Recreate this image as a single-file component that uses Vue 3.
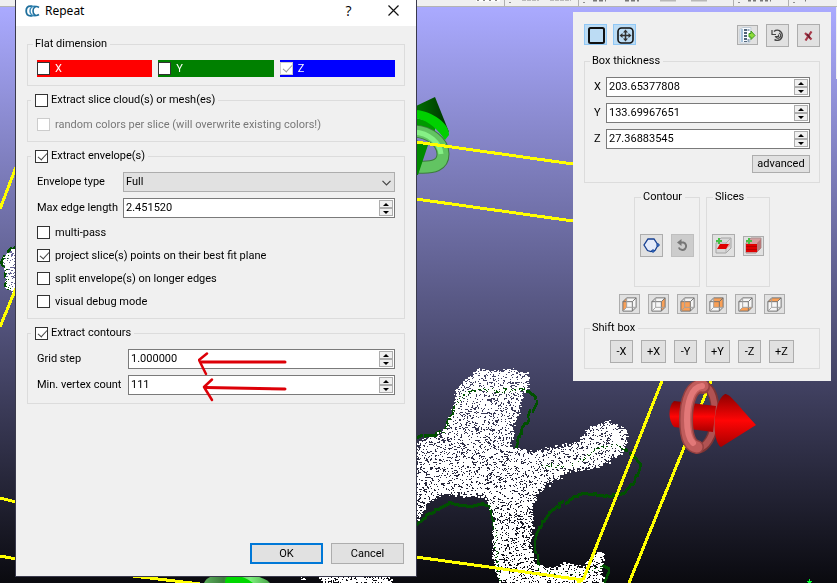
<script setup>
import { ref, onMounted } from 'vue'

const axes = ref([
  { name: 'X', tone: 'red', on: false, locked: false },
  { name: 'Y', tone: 'green', on: false, locked: false },
  { name: 'Z', tone: 'blue', on: true, locked: true },
])

const extractSlices = ref(false)
const extractEnvelopes = ref(true)
const extractContours = ref(true)
const envelopeOptions = ref([
  { id: 'multi', label: 'multi-pass', on: false },
  { id: 'project', label: 'project slice(s) points on their best fit plane', on: true },
  { id: 'split', label: 'split envelope(s) on longer edges', on: false },
  { id: 'debug', label: 'visual debug mode', on: false },
])
const maxEdge = ref('2.451520')
const contourFields = ref([
  { id: 'grid', label: 'Grid step', value: '1.000000', step: 1, digits: 6 },
  { id: 'vertex', label: 'Min. vertex count', value: '111', step: 1, digits: 0 },
])
const thickness = ref([
  { id: 'tx', label: 'X', value: '203.65377808' },
  { id: 'ty', label: 'Y', value: '133.69967651' },
  { id: 'tz', label: 'Z', value: '27.36883545' },
])
const shifts = ['-X', '+X', '-Y', '+Y', '-Z', '+Z']

const cubes = [
  { name: 'Left', face: '2,6 6,2 6,12 2,16' },
  { name: 'Right', face: '12,6 16,2 16,12 12,16' },
  { name: 'Front', face: '2,6 12,6 12,16 2,16' },
  { name: 'Back', face: '6,2 16,2 16,12 6,12' },
  { name: 'Bottom', face: '2,16 6,12 16,12 12,16' },
  { name: 'Top', face: '2,6 6,2 16,2 12,6' },
]

function bump(field, dir) {
  const digits = field.digits ?? 8
  field.value = (parseFloat(field.value) + dir).toFixed(digits)
}
function bumpEdge(dir) {
  maxEdge.value = (parseFloat(maxEdge.value) + dir).toFixed(6)
}

const cloud = ref(null)

const branches = [
  [[416,442],[443,432],[452,413],[455,390],[465,380],[478,368],[490,370],[510,369],[527,373],[527,387],[522,393],[518,413],[512,427],[511,447],[533,452],[553,447],[578,442],[588,428],[607,421],[623,428],[628,437],[620,453],[597,467],[570,470],[550,482],[537,493],[530,510],[532,523],[529,547],[535,563],[543,568],[557,567],[565,562],[582,567],[590,557],[600,550],[603,557],[600,567],[602,583],[500,583],[493,557],[493,517],[485,495],[460,495],[443,493],[430,500],[416,520]],
  [[16,248],[10,250],[4,256],[4,264],[6,269],[5,286],[12,290],[16,291]],
  [[320,575],[392,575],[389,583],[322,583]],
  [[300,576],[305,576],[303,580]],
]
const outlines = [
  [[416,439],[425,435],[435,435],[443,431],[448,420],[454,412],[458,401],[467,393],[480,388],[500,390],[520,389],[529,391],[536,397],[536,402],[531,411],[528,419],[522,427],[520,436],[516,448]],
  [[543,465],[577,465],[590,455],[600,449],[614,446],[623,447],[631,453],[640,463],[637,473],[632,483],[624,493],[610,496],[600,494],[584,494],[570,499],[560,504],[547,514],[541,523],[537,533],[536,545],[537,560],[541,571],[560,573],[590,572],[603,566],[610,569],[607,576],[604,583]],
  [[416,527],[423,519],[430,514],[440,508],[449,503],[462,505],[471,506],[480,504],[490,505],[493,517],[496,540],[497,558],[500,580]],
  [[15,247],[11,250],[5,257],[2,264],[6,269],[5,276],[7,280],[5,285],[8,288],[15,288]],
]

function inside(poly, x, y) {
  let hit = false
  for (let i = 0, j = poly.length - 1; i < poly.length; j = i++) {
    const [xi, yi] = poly[i]
    const [xj, yj] = poly[j]
    if (yi > y !== yj > y && x < ((xj - xi) * (y - yi)) / (yj - yi) + xi) hit = !hit
  }
  return hit
}

onMounted(() => {
  const ctx = cloud.value.getContext('2d')
  let seed = 20117
  const rnd = () => {
    seed = (seed * 16807) % 2147483647
    return seed / 2147483647
  }
  ctx.fillStyle = '#005000'
  for (const line of outlines) {
    let wobble = 0
    for (let i = 1; i < line.length; i++) {
      const [ax, ay] = line[i - 1]
      const [bx, by] = line[i]
      const n = Math.max(Math.abs(bx - ax), Math.abs(by - ay), 1)
      for (let k = 0; k < n; k++) {
        if (rnd() < 0.3) wobble = Math.round(rnd() * 2 - 1)
        ctx.fillRect(Math.round(ax + ((bx - ax) * k) / n) - 1 + wobble, Math.round(ay + ((by - ay) * k) / n) - 1 + wobble, 2, 3)
      }
    }
  }
  ctx.fillStyle = '#ffffff'
  for (const poly of branches) {
    const xs = poly.map((p) => p[0])
    const ys = poly.map((p) => p[1])
    for (let y = Math.min(...ys) - 3; y < Math.max(...ys) + 3; y++) {
      for (let x = Math.min(...xs) - 3; x < Math.max(...xs) + 3; x++) {
        if (rnd() < 0.58 && inside(poly, x + rnd() * 4 - 2, y + rnd() * 4 - 2)) {
          ctx.fillRect(x, y, rnd() < 0.65 ? 2 : 1, rnd() < 0.3 ? 2 : 1)
        }
      }
    }
  }
})
</script>

<template>
  <main class="workspace">
    <div class="scene" aria-hidden="true">
      <canvas ref="cloud" class="layer" width="837" height="583"></canvas>
      <svg class="layer" viewBox="0 0 837 583" preserveAspectRatio="xMinYMin slice">
        <defs>
          <linearGradient id="redCone" x1="0" y1="0" x2="0" y2="1">
            <stop offset="0" stop-color="#8c0000" />
            <stop offset=".5" stop-color="#ff0505" />
            <stop offset="1" stop-color="#a80000" />
          </linearGradient>
          <linearGradient id="greenCone" x1="0" y1="0" x2="1" y2="0">
            <stop offset="0" stop-color="#007000" />
            <stop offset="1" stop-color="#003000" />
          </linearGradient>
          <linearGradient id="greenRing" x1="0" y1="0" x2="1" y2="0">
            <stop offset="0" stop-color="#5cae5c" />
            <stop offset=".3" stop-color="#3c7c3c" />
            <stop offset=".7" stop-color="#7cf07c" />
            <stop offset="1" stop-color="#4ca64c" />
          </linearGradient>
        </defs>

        <path d="M416 118L436 123L434 136L416 128Z" fill="#009a00" />
        <path d="M416 106L435 97L449 132L440 128L416 112Z" fill="url(#greenCone)" />
        <path d="M416 110C432 111 450 124 449 135L445 140C438 130 430 121 416 118Z" fill="#00d000" />
        <g fill="none">
          <path d="M414 131C430 132 443 142 443 154C443 165 434 168 418 167" stroke="#3c7c3c" stroke-width="13" />
          <path d="M414 131C430 132 443 142 443 154C443 165 434 168 418 167" stroke="#62c462" stroke-width="11" />
          <path d="M414 132C429 133 440 143 441 154" stroke="#86f086" stroke-width="5" />
        </g>
        <path d="M416 140L428 145L418 175H416Z" fill="#008a00" />

        <g stroke="#ffff00" stroke-width="3" fill="none" shape-rendering="crispEdges">
          <path d="M416 142L573 164M416 199L573 221M0 209L16 167M0 327L16 288M0 498L16 502M0 556L16 559M133 576L200 584M416 557L583 580M662 381L583 580M711 381L629 583M577 583L583 580" />
        </g>

        <path d="M701 385C712 385 718 402 714 426C711 442 703 450 696 449" fill="none" stroke="#7c3434" stroke-width="9" />
        <path d="M701 385C712 385 717 402 714 426C711 442 703 449 696 448" fill="none" stroke="#b05252" stroke-width="6" />
        <path d="M674 401L716 406L713 432L674 427C668 421 668 406 674 401Z" fill="url(#redCone)" />
        <g fill="none" stroke-linecap="round">
          <path d="M703 387C692 384 686 400 686 420C686 436 690 446 697 447" stroke="#944040" stroke-width="14" />
          <path d="M703 386C692 384 686 400 686 420C686 436 690 446 697 447" stroke="#c05c5c" stroke-width="11" />
          <path d="M702 386C691 387 687 404 687 420C687 432 690 440 693 443" stroke="#e27878" stroke-width="6" />
        </g>
        <path d="M725 394C730 394 735 402 756 425L721 447C712 442 712 402 725 394Z" fill="url(#redCone)" />

        <path d="M204 583Q207 574 230 574Q262 574 270 583Z" fill="url(#greenRing)" />
        <path d="M225 583Q225 574 234 575Q246 577 253 583Z" fill="#00d800" />
        <path d="M807 581h2v-2h1v2h2v1h-1v1h-3v-1h-1z" fill="#00ff30" />
        <path d="M836 7h1v72h-1z" fill="#f0f0f0" />
      </svg>
    </div>

    <div class="toolstrip" aria-hidden="true">
      <svg class="toolmarks" viewBox="0 0 397 6">
        <path d="M64.500 0v6M138.500 0v6M293.500 0v6M348.500 0v6" stroke="#b0b0b0" />
        <path d="M36 0h24" stroke="#fff" stroke-width="3" />
        <path d="M37 0h22" stroke="#888" stroke-width="2" stroke-dasharray="2 4" />
        <path d="M69 2.500h2M143 2.500h2M298 2.500h2M353 2.500h2" stroke="#909090" />
        <path d="M82 0h17M110 0h21" stroke="#bbb" stroke-width="2" stroke-dasharray="4 1" />
        <path d="M153 0h13M185 0h14" stroke="#777" stroke-width="3" stroke-dasharray="4 2" />
        <path d="M220 .5h16M251 .5h16" stroke="#b8b8b8" stroke-width="2" />
        <path d="M308 0h8M320 0h11M365 0h1" stroke="#777" stroke-width="3" stroke-dasharray="3 2" />
      </svg>
    </div>

    <div class="stage">
      <section class="dialog" aria-labelledby="dlg-title">
        <header class="titlebar">
          <svg class="logo" viewBox="0 0 15 14" aria-hidden="true">
            <path d="M7.500 2.200H5.500C3 2.200 1.200 4 1.200 7S3 11.800 5.500 11.800H7.500" fill="none" stroke="#1f6f9c" stroke-width="1.800" />
            <path d="M11 2.500C7 1.500 5 4 5 7S7 12.500 11 11.500" fill="none" stroke="#3b8cba" stroke-width="1.500" />
            <path d="M14 3.500C10.500 1 8 4 8 7S10.500 13 14 10.500" fill="none" stroke="#1f6f9c" stroke-width="1.600" />
          </svg>
          <h1 id="dlg-title">Repeat</h1>
          <button class="caption" type="button" aria-label="Help">?</button>
          <button class="caption" type="button" aria-label="Close">
            <svg width="11" height="11" viewBox="0 0 11 11"><path d="M.5 .5L10.500 10.500M10.500 .5L.5 10.500" stroke="#111" stroke-width="1.200" /></svg>
          </button>
        </header>

        <div class="body">
          <fieldset class="group">
            <legend>Flat dimension</legend>
            <div class="axes">
              <label v-for="a in axes" :key="a.name" class="axis" :class="a.tone">
                <input v-model="a.on" type="checkbox" :disabled="a.locked" /><span>{{ a.name }}</span>
              </label>
            </div>
          </fieldset>

          <fieldset class="group">
            <legend class="checkable">
              <label><input v-model="extractSlices" type="checkbox" /><span>Extract slice cloud(s) or mesh(es)</span></label>
            </legend>
            <label class="option off"><input type="checkbox" disabled /><span>random colors per slice (will overwrite existing colors!)</span></label>
          </fieldset>

          <fieldset class="group">
            <legend class="checkable">
              <label><input v-model="extractEnvelopes" type="checkbox" /><span>Extract envelope(s)</span></label>
            </legend>
            <div class="form envelope">
              <label for="envtype">Envelope type</label>
              <div class="combo">
                <select id="envtype"><option>Full</option><option>Lower</option><option>Upper</option></select>
                <svg class="chevron" width="9" height="6" viewBox="0 0 9 6" aria-hidden="true"><path d="M.5 .8L4.500 4.800L8.500 .8" fill="none" stroke="#444" stroke-width="1.200" /></svg>
              </div>
              <label for="maxedge">Max edge length</label>
              <div class="spin">
                <input id="maxedge" v-model="maxEdge" type="text" />
                <div class="steps">
                  <button type="button" aria-label="Increase" @click="bumpEdge(1)"><svg width="6" height="3" viewBox="0 0 6 3"><path d="M3 0L6 3H0Z" /></svg></button>
                  <button type="button" aria-label="Decrease" @click="bumpEdge(-1)"><svg width="6" height="3" viewBox="0 0 6 3"><path d="M0 0H6L3 3Z" /></svg></button>
                </div>
              </div>
            </div>
            <label v-for="o in envelopeOptions" :key="o.id" class="option spaced"><input v-model="o.on" type="checkbox" /><span>{{ o.label }}</span></label>
          </fieldset>

          <fieldset class="group">
            <legend class="checkable">
              <label><input v-model="extractContours" type="checkbox" /><span>Extract contours</span></label>
            </legend>
            <div class="form contours">
              <template v-for="f in contourFields" :key="f.id">
                <label :for="f.id">{{ f.label }}</label>
                <div class="spin">
                  <input :id="f.id" v-model="f.value" type="text" />
                  <div class="steps">
                    <button type="button" aria-label="Increase" @click="bump(f, 1)"><svg width="6" height="3" viewBox="0 0 6 3"><path d="M3 0L6 3H0Z" /></svg></button>
                    <button type="button" aria-label="Decrease" @click="bump(f, -1)"><svg width="6" height="3" viewBox="0 0 6 3"><path d="M0 0H6L3 3Z" /></svg></button>
                  </div>
                </div>
              </template>
            </div>
            <svg class="pointers" viewBox="0 0 90 50" aria-hidden="true">
              <g fill="none" stroke="#dd0008" stroke-linecap="round" stroke-linejoin="round">
                <path d="M87 10H3" stroke-width="3" /><path d="M9 1.500L1 8L8 22" stroke-width="2.500" />
                <path d="M87 37L8 35.500" stroke-width="3" /><path d="M14 27.500L6 35L14 48" stroke-width="2.500" />
              </g>
            </svg>
          </fieldset>
        </div>

        <footer class="actions">
          <button class="push default" type="button">OK</button>
          <button class="push" type="button">Cancel</button>
        </footer>
      </section>

      <aside class="panel" aria-label="Cross section">
        <div class="toolrow">
          <button class="tool toggle" type="button" aria-label="Show box" aria-pressed="true">
            <svg width="17" height="17" viewBox="0 0 17 17"><rect x="1" y="1" width="15" height="15" rx="1.500" fill="none" stroke="#111" stroke-width="2" /></svg>
          </button>
          <button class="tool toggle" type="button" aria-label="Show interactors" aria-pressed="true">
            <svg width="17" height="17" viewBox="0 0 17 17">
              <rect x="1" y="1" width="15" height="15" rx="3.500" fill="none" stroke="#111" stroke-width="1.600" />
              <path d="M8.500 4v9M4 8.500h9" stroke="#333" stroke-width="1.500" />
              <path d="M8.500 2.500l2.500 3h-5zM8.500 14.500l2.500-3h-5zM2.500 8.500l3-2.500v5zM14.500 8.500l-3-2.500v5z" fill="#333" />
            </svg>
          </button>
          <span class="grow"></span>
          <button class="tool small" type="button" aria-label="Export selection">
            <svg width="17" height="17" viewBox="0 0 17 17">
              <path d="M1 2L4 .5H12L11 15L9 16H1Z" fill="#fafcff" stroke="#c0ccd8" />
              <path d="M3 2v13" stroke="#a9c4dd" stroke-width="2" />
              <path d="M6.500 2v13" stroke="#506478" stroke-width="3" stroke-dasharray="2 1" />
              <path d="M9.500 2v2M9.500 12v3" stroke="#8fa6ba" stroke-width="2" />
              <path d="M10 6.500h2V4l4 4.500l-4 4v-2.500h-2z" fill="#8fdc3a" stroke="#3f9a20" />
            </svg>
          </button>
          <button class="tool" type="button" aria-label="Reset">
            <svg width="13" height="13" viewBox="0 0 13 13" fill="none" stroke="#454545">
              <path d="M3 2.500A5 5 0 1 1 3.500 10.500" stroke-width="1.500" />
              <path d="M8 4A2.700 2.700 0 1 1 4.500 7.500H7.500V5.500" stroke-width="1.200" />
              <path d="M1 1v4.500h4" stroke-width="1.200" />
            </svg>
          </button>
          <button class="tool" type="button" aria-label="Close">
            <svg width="9" height="10" viewBox="0 0 9 10"><path d="M1 2L7.500 8.500M7.500 .5L1.500 9.500" stroke="#a83848" stroke-width="2.200" /><path d="M3 3l3 4" stroke="#642030" stroke-width="1.500" /></svg>
          </button>
        </div>

        <fieldset class="group">
          <legend>Box thickness</legend>
          <div class="form thickness">
            <template v-for="f in thickness" :key="f.id">
              <label :for="f.id">{{ f.label }}</label>
              <div class="spin">
                <input :id="f.id" v-model="f.value" type="text" />
                <div class="steps">
                  <button type="button" aria-label="Increase" @click="bump(f, 1)"><svg width="6" height="3" viewBox="0 0 6 3"><path d="M3 0L6 3H0Z" /></svg></button>
                  <button type="button" aria-label="Decrease" @click="bump(f, -1)"><svg width="6" height="3" viewBox="0 0 6 3"><path d="M0 0H6L3 3Z" /></svg></button>
                </div>
              </div>
            </template>
          </div>
          <button class="tool advanced" type="button">advanced</button>
        </fieldset>

        <div class="pair">
          <fieldset class="group mini">
            <legend>Contour</legend>
            <div class="minirow">
              <button class="tool" type="button" aria-label="Extract contour">
                <svg width="17" height="15" viewBox="0 0 17 15">
                  <path d="M5 1H11L15 7L12 12.500L8 13.500L4.500 12.500L1 7Z" fill="#e4ebfa" stroke="#163f91" stroke-width="1.300" />
                  <path d="M14 6h2v2h-2zM9 12h2v2h-2z" fill="#8cc4ff" stroke="#0b3d96" />
                </svg>
              </button>
              <button class="tool disabled" type="button" aria-label="Remove last contour" disabled>
                <svg width="13" height="13" viewBox="0 0 13 13"><path d="M4 3.500H7.500A3.800 3.800 0 1 1 2.800 8.500" fill="none" stroke="#777" stroke-width="2" /><path d="M1 3.500L5.500 0V7Z" fill="#777" /></svg>
              </button>
            </div>
          </fieldset>
          <fieldset class="group mini">
            <legend>Slices</legend>
            <div class="minirow">
              <button class="tool" type="button" aria-label="Export slice">
                <svg width="17" height="17" viewBox="0 0 17 17">
                  <path d="M1 6L6 1H16V11L11 16H1Z" fill="#d8d8d8" stroke="#a4a4a4" /><path d="M11 6V16M11 6L16 1M1 6H11" stroke="#b0b0b0" />
                  <path d="M15 5v4l-4 3z" fill="#e8a0a0" />
                  <path d="M2 12L5 7H14L11 12Z" fill="#e00000" />
                  <path d="M4 1v6M1 4h6" stroke="#45c045" stroke-width="2" />
                </svg>
              </button>
              <button class="tool small" type="button" aria-label="Repeat slices">
                <svg width="17" height="17" viewBox="0 0 17 17">
                  <path d="M1 6L6 1H16V11L11 16H1Z" fill="#d4a0a0" stroke="#a89090" /><path d="M12 6L16 2V11L12 15Z" fill="#b87878" />
                  <path d="M1 7H12V15H1Z" fill="#e00000" /><path d="M1 9.500h11M1 12.500h11" stroke="#b80000" />
                  <path d="M4 1v6M1 4h6" stroke="#45c045" stroke-width="2" />
                </svg>
              </button>
            </div>
          </fieldset>
        </div>

        <div class="cubes">
          <button v-for="c in cubes" :key="c.name" class="tool small" type="button" :aria-label="c.name + ' view'">
            <svg width="17" height="17" viewBox="0 0 18 18">
              <path d="M2 6H12V16H2ZM6 2H16V12H6Z" fill="#f6f6f6" />
              <polygon :points="c.face" fill="#f9a057" />
              <path d="M2 6L6 2H16V12L12 16H2ZM2 6H12V16M12 6L16 2" fill="none" stroke="#707070" />
              <path d="M6 2V12H16M6 12L2 16" fill="none" stroke="#a0a0a0" />
            </svg>
          </button>
        </div>

        <fieldset class="group shift">
          <legend>Shift box</legend>
          <div class="shiftrow">
            <button v-for="s in shifts" :key="s" class="tool text" :class="{ plus: s[0] === '+' }" type="button">{{ s }}</button>
          </div>
        </fieldset>
      </aside>
    </div>
  </main>
</template>

<style>
body { margin: 0; background: #0d0d14; }
</style>

<style scoped>
* { box-sizing: border-box; }
.workspace {
  position: relative;
  min-height: 100vh;
  overflow: hidden;
  font: 11px/14px Tahoma, Roboto, "Noto Sans", sans-serif;
  color: #000;
}
.scene { position: absolute; inset: 0; background: linear-gradient(#aaaaff 7px, #0a0a0f); }
.layer { position: absolute; inset: 0; width: 100%; height: 100%; object-fit: cover; object-position: left top; }
.toolstrip { position: absolute; top: 0; left: 0; right: 0; height: 7px; background: #f0f0f0; border-bottom: 1px solid #b4b4b4; display: flex; justify-content: flex-end; }
.toolmarks { width: 397px; height: 6px; }
.stage { position: relative; display: flex; justify-content: space-between; align-items: flex-start; padding: 0 6px 0 15px; }

.dialog { display: flex; flex-direction: column; flex: 0 0 402px; min-height: calc(100vh - 6px); background: #f0f0f0; border: 1px solid #3a3a4c; border-top: 0; }
.titlebar { display: flex; align-items: center; height: 26px; padding: 0 0 5px 9px; background: #fff; }
.logo { width: 15px; height: 14px; }
h1 { flex: 1; margin: 0 0 0 5px; font: 12px/16px "Noto Sans", "Open Sans", sans-serif; }
.caption { width: 45px; height: 20px; padding: 0; border: 0; background: none; font: 14px/20px "Open Sans", sans-serif; }
.caption svg { display: block; margin: 0 auto; }
.body { display: flex; flex-direction: column; flex: 1; gap: 7px; padding: 11px 11px 12px; }

.group { position: relative; min-width: 0; margin: 0; padding: 9px 9px 8px; border: 1px solid #dcdcdc; }
legend { height: 14px; margin-left: -4px; padding: 0 3px 0 2px; white-space: nowrap; }
legend.checkable { margin-left: -6px; padding-left: 4px; }
legend label { display: flex; align-items: center; gap: 3px; height: 14px; }
.axes { display: grid; grid-template-columns: repeat(3, 1fr); gap: 6px; }
.axis { display: flex; align-items: center; gap: 5px; height: 17px; color: #fff; }
.red { background: #ff0000; }
.green { background: #008000; }
.blue { background: #0000ff; }
.option { display: flex; align-items: center; gap: 5px; height: 17px; white-space: nowrap; }
.option.spaced { margin-top: 6px; }
.off { color: #787878; }

input[type="checkbox"] { appearance: none; flex: none; width: 13px; height: 13px; margin: 0; border: 1px solid #333; background: #fff; }
input[type="checkbox"]:disabled { border-color: #ccc; }
input[type="checkbox"]:checked::before {
  content: ""; display: block; width: 4px; height: 8px; margin: 0 0 0 4px;
  border: solid #444; border-width: 0 1px 1px 0; transform: rotate(42deg);
}
input[type="checkbox"]:disabled:checked::before { border-color: #999; }

.form { display: grid; gap: 6px 0; align-items: center; }
.envelope { grid-template-columns: 86px 1fr; }
.contours { grid-template-columns: 91px 1fr; }
.thickness { grid-template-columns: 12px 1fr; }
.form label { white-space: nowrap; }
.combo { position: relative; display: flex; height: 20px; }
select { appearance: none; width: 100%; padding: 0 2px; border: 1px solid #adadad; border-radius: 0; background: #e1e1e1; font: inherit; color: inherit; }
.chevron { position: absolute; right: 4px; top: 8px; pointer-events: none; }
.spin { display: flex; height: 20px; padding: 1px; border: 1px solid #7a7a7a; background: #fff; }
.spin input { flex: 1; min-width: 0; padding: 0 1px; border: 0; background: none; font: inherit; color: inherit; outline: none; }
.steps { display: flex; flex-direction: column; width: 14px; }
.steps button { display: flex; align-items: center; justify-content: center; flex: 1; min-height: 0; padding: 0; border: 1px solid #adadad; background: #f0f0f0; }
.steps svg { display: block; }
.pointers { position: absolute; right: 116px; top: 12px; width: 90px; height: 50px; pointer-events: none; }

.actions { display: flex; justify-content: flex-end; gap: 8px; padding: 0 12px 12px; }
.push { width: 73px; height: 21px; padding: 0; border: 1px solid #adadad; background: #e1e1e1; font: inherit; color: inherit; }
.push.default { border: 2px solid #0078d7; }

.panel { display: flex; flex-direction: column; flex: 0 0 258px; gap: 7px; margin-top: 12px; padding: 12px 11px; background: #f0f0f0; }
.toolrow { display: flex; align-items: flex-start; height: 23px; gap: 8px; }
.grow { flex: 1; }
.tool { display: flex; align-items: center; justify-content: center; width: 23px; height: 23px; padding: 0; border: 1px solid #adadad; background: #e1e1e1; font: inherit; color: inherit; }
.tool svg { flex: none; display: block; }
.tool.small { width: 21px; height: 20px; }
.toolrow .small { margin-top: 1px; }
.tool.toggle { height: 21px; padding: 2px 0 0 1px; border-color: #90c8f6; background: #bcdcf4; }
.tool.toggle + .toggle { margin-left: -2px; }
.tool.disabled { border-color: #bfbfbf; background: #cccccc; }
.tool.advanced { width: 58px; height: 18px; margin: 6px 0 1px auto; }
.pair { display: flex; justify-content: center; gap: 6px; }
.mini { height: 97px; padding: 0 5px; }
.mini legend { margin-left: 1px; }
.minirow { display: flex; align-items: center; gap: 8px; height: 81px; padding-top: 2px; }
.cubes { display: flex; justify-content: center; gap: 8px; }
.shift { padding: 5px 9px; }
.shiftrow { display: flex; justify-content: center; gap: 8px; }
.tool.text.plus { width: 25px; }
</style>
